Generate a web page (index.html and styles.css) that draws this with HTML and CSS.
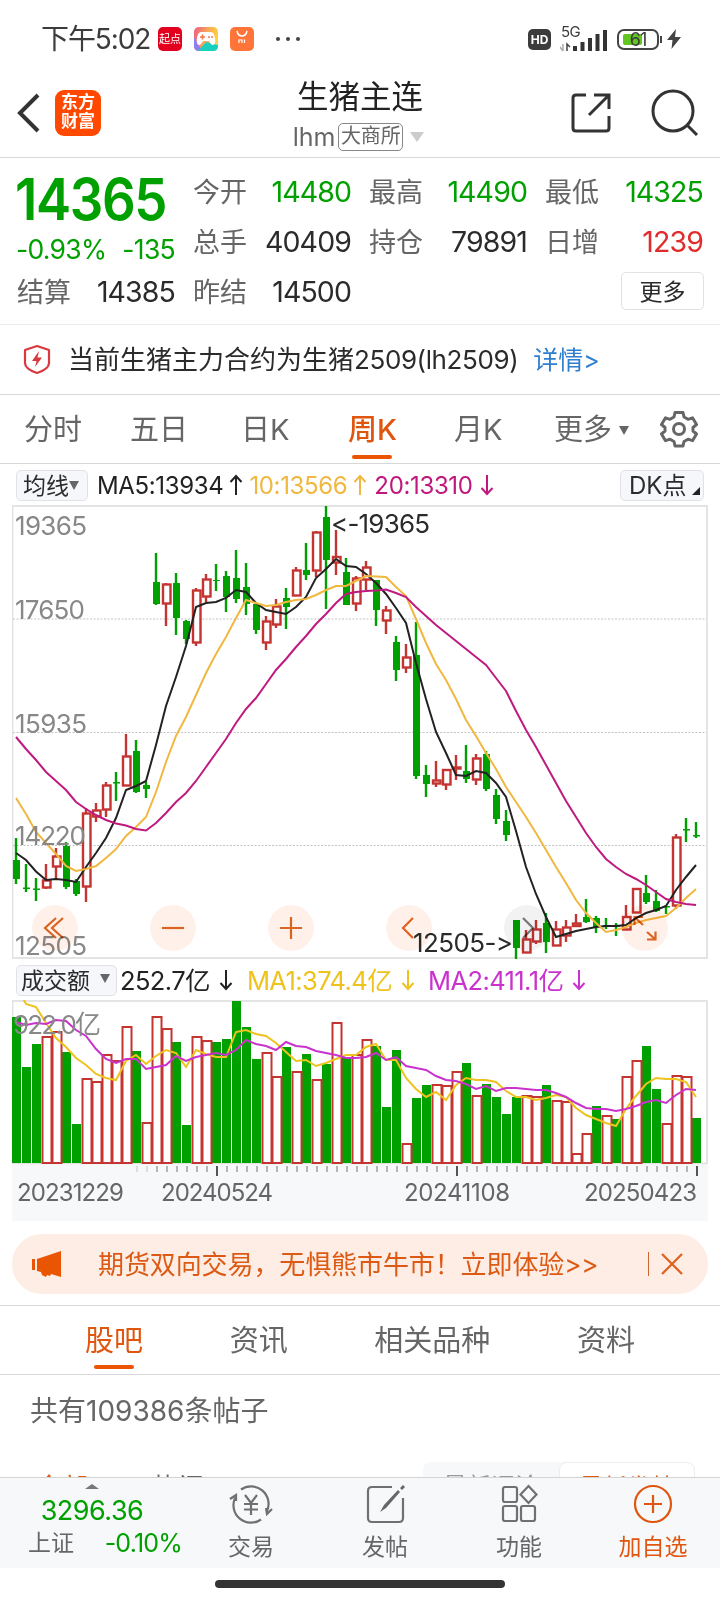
FILE: index.html
```html
<!DOCTYPE html>
<html lang="zh-CN">
  <head>
    <meta charset="UTF-8" />
    <title>生猪主连</title>
    <link rel="stylesheet" href="styles.css">
  </head>
  <body>
    <svg class="defs">
      <symbol id="up" viewBox="0 0 14 22"><path d="M7 21V2M1.5 8L7 2l5.500 6" /></symbol>
      <symbol id="down" viewBox="0 0 14 22"><path d="M7 1v19M1.500 14L7 20l5.500-6" /></symbol>
    </svg>

    <div class="status">
      <span class="time">下午5:02</span>
      <span class="app qd">起点</span>
      <svg class="app" viewBox="0 0 24 24">
        <defs>
          <linearGradient id="game" x1="0" y1="0.200" x2="1" y2="0.500">
            <stop offset="0" stop-color="#f0607e" />
            <stop offset="0.500" stop-color="#f7a65a" />
            <stop offset="1" stop-color="#fdd835" />
          </linearGradient>
        </defs>
        <rect width="24" height="24" rx="5" fill="url(#game)" />
        <path d="M0 10l8 14H5q-5 0-5-5z" fill="#8f7cf0" />
        <path d="M4 24l8-9 12 3v1q0 5-5 5z" fill="#19cfc0" />
        <path d="M7 5h10q3 0 4 6 1 7-2 7-2 0-4-4H9q-2 4-4 4-3 0-2-7 1-6 4-6z" fill="#fff" />
        <path d="M6 10h5M8.500 7.500v5M14 10h2M17 10h2" stroke="#f4784c" stroke-width="1.600" />
      </svg>
      <svg class="app" viewBox="0 0 24 24">
        <rect width="24" height="24" rx="5" fill="#ff7539" />
        <path d="M7 4q1 5 5 5t5-5" fill="none" stroke="#fff" stroke-width="1.500" />
        <path d="M9 16v-3h3v3M14.500 12.500V16" fill="none" stroke="#fff" stroke-width="1.200" />
      </svg>
      <span class="dots"><i></i><i></i><i></i></span>
      <span class="hd">HD</span>
      <span class="signal">
        <span class="net">5G</span>
        <svg width="48" height="26" viewBox="0 0 48 26">
          <path d="M3 18v7M0 21l3 4" stroke="#aaa" stroke-width="1.500" fill="none" />
          <path d="M7 25v-7l3 3" stroke="#444" stroke-width="1.500" fill="none" />
          <path d="M15 25v-5M22.500 25v-9M30 25V12M37.500 25V8M45 25V4" stroke="#333" stroke-width="4" />
        </svg>
      </span>
      <span class="battery"><b></b><span>61</span></span>
      <svg class="bolt" width="14" height="20" viewBox="0 0 14 20"><path d="M9 0L0 11h5.500L4.500 20 14 8H8z" fill="#444" /></svg>
    </div>

    <header>
      <svg class="back" width="24" height="40" viewBox="0 0 24 40"><path d="M21 2L3 20l18 18" /></svg>
      <div class="logo">东方<br>财富</div>
      <div class="title">
        <h1>生猪主连</h1>
        <div class="sub"><span>lhm</span><em>大商所</em><i class="tri"></i></div>
      </div>
      <svg class="share" width="42" height="42" viewBox="0 0 42 42"><path d="M16 3H6Q3 3 3 6v30q0 3 3 3h30q3 0 3-3V24M24 3h15v14M39 3L19 23" /></svg>
      <svg class="search" width="50" height="50" viewBox="0 0 50 50"><circle cx="23" cy="22" r="20" /><path d="M37 36l10 10" /></svg>
    </header>

    <section class="quote">
      <div class="last">
        <strong>14365</strong>
        <p><span>-0.93%</span><span>-135</span></p>
      </div>
      <div class="cell"><label>今开</label><span class="green">14480</span></div>
      <div class="cell"><label>最高</label><span class="green">14490</span></div>
      <div class="cell"><label>最低</label><span class="green">14325</span></div>
      <div class="cell"><label>总手</label><span>40409</span></div>
      <div class="cell"><label>持仓</label><span>79891</span></div>
      <div class="cell"><label>日增</label><span class="red">1239</span></div>
      <div class="cell"><label>结算</label><span>14385</span></div>
      <div class="cell"><label>昨结</label><span>14500</span></div>
      <button class="more">更多</button>
    </section>

    <section class="notice">
      <svg width="28" height="31" viewBox="0 0 28 31">
        <path d="M14 2l12 4v13q0 6-12 10Q2 25 2 19V6z" fill="none" stroke="#d9383c" stroke-width="2.200" stroke-linejoin="round" />
        <path d="M16 7l-7 10h4.500L12 23l7-9.500h-4.500z" fill="#d9383c" />
      </svg>
      <span class="msg">当前生猪主力合约为生猪<b>2509(lh2509)</b></span>
      <a>详情&gt;</a>
    </section>

    <nav class="periods">
      <span>分时</span>
      <span>五日</span>
      <span>日K</span>
      <span class="active">周K</span>
      <span>月K</span>
      <span>更多<i class="tri"></i></span>
      <svg width="38" height="38" viewBox="0 0 38 38">
        <path d="M15 2.500h8l1 4.500 4 2.300 4.500-1.500 4 6.700-3.500 3v3.500l3.500 3-4 6.700-4.500-1.500-4 2.300-1 4.500h-8l-1-4.500-4-2.300-4.500 1.500-4-6.700 3.500-3v-3.500l-3.500-3 4-6.700 4.500 1.500 4-2.300z" />
        <circle cx="19" cy="19" r="5.500" />
      </svg>
    </nav>

    <div class="ma-row">
      <button class="avg">均线<i class="tri"></i></button>
      <span class="ma5">MA5:13934</span><svg class="arrow ma5"><use href="#up" /></svg>
      <span class="ma10">10:13566</span><svg class="arrow ma10"><use href="#up" /></svg>
      <span class="ma20">20:13310</span><svg class="arrow ma20"><use href="#down" /></svg>
      <button class="dk">DK点<i></i></button>
    </div>

    <div class="chart">
      <svg id="kline" width="696" height="456" viewBox="12 504 696 456"></svg>
      <div class="tools">
        <span><svg viewBox="0 0 46 46"><path d="M24 13L13 23l11 10M31 13L20 23l11 10" /></svg></span>
        <span><svg viewBox="0 0 46 46"><path d="M12 23h22" /></svg></span>
        <span><svg viewBox="0 0 46 46"><path d="M12 23h22M23 12v22" /></svg></span>
        <span><svg viewBox="0 0 46 46"><path d="M27 13L17 23l10 10" /></svg></span>
        <span class="off"><svg viewBox="0 0 46 46"><path d="M19 13l10 10-10 10" /></svg></span>
        <span><svg viewBox="0 0 46 46"><path d="M21 20l-8-7.500M12.500 20v-8H21M25 27l8 7M25 34.500h8.500v-8" /></svg></span>
      </div>
    </div>

    <div class="vol-row">
      <button>成交额<i class="tri"></i></button>
      <span class="v0">252.7亿</span><svg class="arrow v0"><use href="#down" /></svg>
      <span class="v1">MA1:374.4亿</span><svg class="arrow v1"><use href="#down" /></svg>
      <span class="v2">MA2:411.1亿</span><svg class="arrow v2"><use href="#down" /></svg>
    </div>

    <div class="chart">
      <svg id="volume" width="696" height="165" viewBox="12 1000 696 165"></svg>
    </div>
    <div class="chart axis">
      <svg id="axis" width="696" height="56" viewBox="12 1165 696 56"></svg>
    </div>

    <div class="banner">
      <svg width="34" height="28" viewBox="0 0 34 28">
        <path d="M1 9h3v11H1zM6 9l24-8v26l-10-3-1 2-3-1-1 2-4-2-1-3-4-1z" fill="#ea5504" />
      </svg>
      <span>期货双向交易，无惧熊市牛市！立即体验&gt;&gt;</span>
      <i></i>
      <svg width="24" height="24" viewBox="0 0 24 24"><path d="M2 2l20 20M22 2L2 22" stroke="#e0601c" stroke-width="2.200" /></svg>
    </div>

    <nav class="tabs">
      <span class="active">股吧</span>
      <span>资讯</span>
      <span>相关品种</span>
      <span>资料</span>
    </nav>

    <main>
      <p>共有109386条帖子</p>
      <div class="filters">
        <span class="on">全部</span>
        <span>热门</span>
        <div class="sort"><span>最新评论</span><span class="on">最新发帖</span></div>
      </div>
    </main>

    <footer>
      <div class="index">
        <i class="tri"></i>
        <strong>3296.36</strong>
        <p>上证<span>-0.10%</span></p>
      </div>
      <div class="item">
        <svg viewBox="0 0 44 42">
          <path d="M12 6.500A17.500 17.500 0 0 1 38 28M32 36.500A17.500 17.500 0 0 1 6 15M1 16l6-4v6M43 26l-5 5-1-6M16 12l6 8 6-8M22 20v12M15 21h14M15 26.500h14" />
        </svg>
        <span>交易</span>
      </div>
      <div class="item">
        <svg viewBox="0 0 44 42">
          <path d="M29 4H9Q5 4 5 8v27q0 4 4 4h27q4 0 4-4V15" />
          <path d="M35 7L21 22l-4 7 6-4L37 9zM37 5l3-3 2 2-3 3z" class="fill" />
        </svg>
        <span>发帖</span>
      </div>
      <div class="item">
        <svg viewBox="0 0 44 42">
          <rect x="6" y="4" width="14" height="15" rx="2" />
          <rect x="6" y="23" width="14" height="15" rx="2" />
          <rect x="24" y="23" width="14" height="15" rx="2" />
          <path d="M31.500 3l8 8.500-8 8.500-8-8.500z" />
        </svg>
        <span>功能</span>
      </div>
      <div class="item add">
        <svg viewBox="0 0 44 42"><circle cx="22" cy="21" r="18" /><path d="M13 21h18M22 12v18" /></svg>
        <span>加自选</span>
      </div>
    </footer>
    <div class="home"></div>

    <script>
      const GREEN = "#00a000";
      const RED = "#c43431";
      const x = (i) => 16 + i * 10;

      // colour, high, body top, body bottom, low
      const candles = [
        ["g", 838, 860, 879, 884], ["g", 864, 887.5, 889, 892], ["g", 878, 888.5, 890, 901], ["r", 864, 880, 888, 889],
        ["r", 848, 856, 867, 880], ["g", 842, 846, 887, 889], ["g", 879, 881, 894, 896], ["r", 808, 813, 887, 902],
        ["r", 803, 810, 817, 822], ["r", 782, 785, 810, 817], ["g", 772, 782, 783.5, 801], ["r", 734, 756, 786, 786],
        ["g", 740, 751, 792, 793], ["g", 782, 785, 789, 798], ["g", 553, 582, 604, 605], ["r", 583, 584, 604, 626],
        ["g", 573, 583, 618, 635], ["g", 620, 621, 639, 644], ["r", 588, 590, 643, 646], ["r", 574, 579, 597, 602],
        ["g", 564, 580, 581, 591], ["g", 571, 576, 597, 612], ["g", 550, 578, 599, 603], ["g", 563, 587, 604, 615],
        ["g", 603, 604, 630, 634], ["r", 616, 621, 643, 650], ["r", 599, 606, 625, 628], ["g", 588, 598, 607, 629],
        ["r", 567, 570, 596, 596], ["g", 543, 570, 575, 580], ["r", 531, 532, 571, 577], ["g", 506, 517, 560, 609],
        ["r", 530, 556.5, 563, 575], ["g", 558, 572, 605, 605], ["r", 576, 578, 604, 611], ["r", 561, 567, 580, 590],
        ["g", 580, 580, 610, 626], ["r", 606, 610, 621, 634], ["g", 636, 642, 670, 681], ["r", 644, 657, 668, 673],
        ["g", 622, 655, 776, 779], ["g", 765, 775, 784, 797], ["r", 761, 780, 784, 787], ["r", 769, 769.5, 785, 790],
        ["r", 755, 767, 769, 780], ["g", 745, 771, 779, 783], ["r", 754, 758, 780, 785], ["g", 751, 754, 789, 791],
        ["g", 789, 795, 819, 824], ["g", 810, 821, 835, 841], ["g", 920, 920, 948, 959], ["r", 930, 939, 953, 953],
        ["r", 920, 929, 942, 944], ["g", 913, 923, 942, 953], ["r", 921, 929, 946, 946], ["r", 920, 927, 936, 942],
        ["r", 914, 923, 926.5, 926.5], ["g", 899, 917, 922, 923], ["g", 916, 918, 927, 933], ["g", 918, 925, 927, 929],
        ["g", 923, 926, 927, 936], ["r", 905, 916.5, 930, 930], ["r", 888, 888.5, 913, 913], ["g", 875, 893, 902, 904],
        ["g", 890, 901, 911, 912], ["g", 905, 906, 907.5, 914], ["r", 834, 837, 906, 909], ["g", 818, 829, 830.5, 842],
        ["g", 822, 835, 836.5, 838],
      ];

      const ma5 = [853, 860, 871.5, 880, 879, 880, 882, 867, 853, 838, 818, 790, 786, 781, 745, 706, 677, 646, 607, 603,
        602, 598, 590, 592, 603, 610, 612, 614, 607, 597, 578, 569, 559, 566, 567, 574, 583, 594, 608, 623, 663, 699,
        732, 753, 775, 776, 771, 773, 783, 797, 831, 867, 894, 917, 937, 934, 931, 929, 927, 926, 926, 925, 918, 913,
        910, 906, 890, 877, 865];
      const ma10 = [798, 814, 832, 843, 854, 866, 871, 869, 866, 858, 849, 836, 827, 817, 792, 762, 736, 717, 695, 673,
        654, 637, 618, 600, 603, 606, 605, 602, 600, 599, 595, 590, 586, 586, 581, 576, 576.5, 577, 587, 596, 619, 643,
        664, 680, 699, 720, 736, 753, 769, 787, 802, 817, 833, 850, 867, 883, 900, 913, 923, 932, 930, 927, 923, 920,
        918, 916, 908, 898, 889];
      const ma20 = [737, 749, 760, 772, 781, 790, 802, 809, 815, 820, 823.5, 825.5, 829, 830.5, 823, 813, 802, 793, 781,
        767, 753, 739, 723, 709, 698, 684, 670, 659, 647, 636, 624, 614, 603, 594, 592, 591, 590.5, 589.5, 593, 597, 607,
        616, 625, 633, 641, 649, 657, 665, 678, 691, 711, 730, 747, 765, 783, 801, 817, 833, 847, 859, 867, 874, 879,
        885, 892, 899, 902, 904, 905];

      // top of each volume bar, colours below
      const volTops = [1017, 1067, 1044, 1037, 1032, 1052, 1124, 1079, 1082, 1055, 1061, 1027, 1051, 1123, 1017, 1029,
        1042, 1125, 1037, 1041, 1042, 1039, 1001, 1027, 1059, 1053, 1077, 1047, 1072, 1054, 1080, 1064, 1023, 1057,
        1055, 1040, 1046, 1107, 1050, 1144, 1098, 1085, 1085, 1086, 1072, 1063, 1096, 1084, 1097, 1114, 1097, 1096,
        1097, 1085, 1101, 1102, 1154, 1134, 1106, 1116, 1119, 1077, 1061, 1046, 1089, 1124, 1076, 1077, 1118];
      const volColors = "gggrrggrrrrrgrrrggrrgggggrrgrgrgrgrrgggrggrrrgrggggrrgrrrrgrgrrggrrrg";
      const volMa1 = [985, 1004, 1007, 1023, 1038, 1047, 1058, 1065, 1074, 1078, 1080, 1061, 1055, 1064, 1056, 1050,
        1053, 1067, 1050, 1054, 1057, 1057, 1032, 1030, 1034, 1036, 1043, 1052, 1061, 1060, 1066, 1063, 1059, 1055,
        1055, 1047, 1044, 1060, 1060, 1078, 1089, 1097, 1092, 1100, 1085, 1078, 1080, 1080, 1082, 1091, 1097, 1097,
        1100, 1098, 1095, 1097, 1108, 1115, 1119, 1123, 1126, 1109, 1096, 1084, 1078, 1079, 1079, 1082, 1097];
      const volMa2 = [1022, 1025, 1023, 1024, 1020, 1021, 1030, 1036, 1049, 1059, 1063, 1059, 1059, 1069, 1067, 1065,
        1056, 1061, 1057, 1055, 1053, 1055, 1050, 1040, 1044, 1046, 1050, 1042, 1046, 1047, 1051, 1053, 1055, 1058,
        1058, 1057, 1053, 1060, 1057, 1066, 1068, 1070, 1076, 1080, 1081, 1084, 1089, 1086, 1091, 1088, 1088, 1089,
        1090, 1090, 1093, 1097, 1103, 1108, 1109, 1109, 1111, 1109, 1106, 1102, 1100, 1103, 1095, 1089, 1090];

      function line(values, color) {
        const points = values.map((y, i) => `${x(i)},${y}`).join(" ");
        return `<polyline points="${points}" fill="none" stroke="${color}" stroke-width="2" />`;
      }

      function label(text, left, baseline, width, cls) {
        return `<text x="${left}" y="${baseline}" textLength="${width}" class="${cls}">${text}</text>`;
      }

      function drawKline() {
        let out = "";
        [619, 732.5, 845.5].forEach((y) => {
          out += `<path d="M13 ${y}H707" class="grid" />`;
        });
        out += `<rect x="12.500" y="506" width="694.500" height="452" class="frame" />`;
        candles.forEach(([c, high, top, bottom, low], i) => {
          const cx = x(i);
          if (c === "g") {
            out += `<path d="M${cx} ${high}V${low}" stroke="${GREEN}" stroke-width="2.400" />`;
            out += `<rect x="${cx - 3}" y="${top}" width="7" height="${bottom - top}" fill="${GREEN}" />`;
          } else {
            out += `<path d="M${cx} ${high}V${top}M${cx} ${bottom}V${low}" stroke="${RED}" stroke-width="2.400" />`;
            out += `<rect x="${cx - 3}" y="${top + 0.5}" width="7.500" height="${Math.max(bottom - top - 1, 1)}" fill="#fff" stroke="${RED}" stroke-width="2.400" />`;
          }
        });
        out += line(ma5, "#222") + line(ma10, "#f0b840") + line(ma20, "#bf1a80");
        out += label("19365", 15, 535, 72, "scale");
        out += label("17650", 15, 619, 70, "scale");
        out += label("15935", 15, 733, 72, "scale");
        out += label("14220", 15, 845, 71, "scale");
        out += label("12505", 15, 955, 72, "scale");
        out += label("&lt;-19365", 331, 533, 99, "mark");
        out += label("12505-&gt;", 413, 952, 100, "mark");
        document.getElementById("kline").innerHTML = out;
      }

      function drawVolume() {
        let out = `<rect x="12.500" y="1001" width="694.500" height="162.500" class="frame" />`;
        volTops.forEach((top, i) => {
          const left = 12 + i * 10;
          if (volColors[i] === "g") {
            out += `<rect x="${left}" y="${top}" width="9" height="${1163 - top}" fill="${GREEN}" />`;
          }
        });
        volTops.forEach((top, i) => {
          const left = 12 + i * 10;
          if (volColors[i] === "r") {
            out += `<rect x="${left + 0.5}" y="${top}" width="9" height="${1163 - top}" fill="#fff" stroke="${RED}" stroke-width="2" />`;
          }
        });
        out += line(volMa1, "#eec31e") + line(volMa2, "#c932cc");
        out += label("922.0亿", 13, 1034, 88, "scale");
        document.getElementById("volume").innerHTML = out;
      }

      function drawAxis() {
        let out = "";
        for (let i = 0; i < 57; i++) {
          const tx = 137 + i * 10;
          const major = tx === 217 || tx === 457 || tx === 697;
          const color = major ? "#555" : i < 2 ? "#ddd" : "#b5b5b5";
          out += `<path d="M${tx} 1166v${major ? 10 : 6}" stroke="${color}" stroke-width="2" />`;
        }
        out += label("20231229", 17, 1201, 107, "date");
        out += label("20240524", 161, 1201, 112, "date");
        out += label("20241108", 404, 1201, 106, "date");
        out += label("20250423", 584, 1201, 113, "date");
        document.getElementById("axis").innerHTML = out;
      }

      drawKline();
      drawVolume();
      drawAxis();
    </script>
  </body>
</html>
```

FILE: styles.css
```css
* {
  box-sizing: border-box;
}
body {
  font-family: Inter, "Noto Sans CJK SC", sans-serif;
  font-feature-settings: "calt" 0;
  margin: 0;
  width: 720px;
  height: 1600px;
  background: #fff;
  color: #2b2b2b;
  overflow: hidden;
  white-space: nowrap;
}
p,
h1 {
  margin: 0;
  font-weight: 400;
}
i,
em {
  font-style: normal;
}
b {
  font-weight: 400;
}
svg {
  display: block;
  flex: none;
}
button {
  font: inherit;
  color: inherit;
  padding: 0;
  border: 1.5px solid #e0e2e6;
  border-radius: 5px;
  background: #f6f7fa;
  display: flex;
  align-items: center;
}
.defs {
  width: 0;
  height: 0;
  position: absolute;
}
.tri {
  display: inline-block;
  border: 5px solid transparent;
  border-top: 9px solid #666;
  border-bottom: 0;
}

/* status bar */
.status {
  height: 78px;
  padding: 0 39px 0 41px;
  display: flex;
  align-items: center;
  color: #3c3c3c;
}
.time {
  font-size: 28px;
  width: 117px;
  padding-bottom: 4px;
  letter-spacing: -1.1px;
}
.app {
  width: 24px;
  height: 24px;
  margin-right: 12px;
}
.qd {
  background: #e2001e;
  border-radius: 5px;
  color: #fff;
  font-size: 11px;
  line-height: 24px;
  text-align: center;
}
.dots {
  display: flex;
  gap: 6px;
  margin: 0 auto 0 10px;
}
.dots i {
  width: 4px;
  height: 4px;
  border-radius: 50%;
  background: #444;
}
.hd {
  width: 23px;
  height: 21px;
  border-radius: 5px;
  background: #3c3c3c;
  color: #fff;
  font-size: 12px;
  font-weight: 700;
  line-height: 21px;
  text-align: center;
}
.signal {
  width: 48px;
  height: 26px;
  margin: 0 9px;
  position: relative;
}
.net {
  position: absolute;
  left: 1px;
  top: -2px;
  font-size: 15px;
  line-height: 15px;
  letter-spacing: -0.5px;
}
.battery {
  width: 42px;
  height: 21px;
  border: 2px solid #444;
  border-radius: 7px;
  position: relative;
  margin-right: 8px;
  font-size: 18px;
  line-height: 17px;
  letter-spacing: -1px;
  text-align: center;
}
.battery span {
  position: relative;
}
.battery b {
  position: absolute;
  left: 4px;
  top: 3px;
  width: 19px;
  height: 11px;
  border-radius: 2px;
  background: #62c520;
}
.battery::after {
  content: "";
  position: absolute;
  right: -5px;
  top: 5px;
  width: 2px;
  height: 7px;
  background: #444;
}

/* header */
header {
  height: 80px;
  padding: 0 20px 10px 17px;
  display: flex;
  align-items: center;
  border-bottom: 1.5px solid #d8d8d8;
}
header path,
header circle {
  fill: none;
  stroke: #333;
  stroke-width: 3;
}
.back path {
  stroke-width: 4;
}
.logo {
  width: 46px;
  height: 46px;
  margin-left: 14px;
  border-radius: 9px;
  background: #ff4800;
  color: #fff;
  font-size: 17px;
  font-weight: 700;
  line-height: 19px;
  text-align: center;
  padding-top: 3px;
}
.title {
  flex: 1;
  height: 72px;
  padding-left: 46px;
  display: flex;
  flex-direction: column;
  align-items: center;
}
h1 {
  font-size: 31.5px;
  line-height: 40px;
  padding-left: 3px;
  color: #222;
}
.sub {
  display: flex;
  align-items: center;
  height: 28px;
  margin-top: 6px;
  color: #666;
  font-size: 25px;
}
.sub em {
  margin: 0 7px 0 3px;
  border: 1.5px solid #888;
  border-radius: 5px;
  width: 65px;
  height: 28px;
  font-size: 20px;
  line-height: 24px;
  text-align: center;
}
.sub .tri {
  border-width: 10px 7px 0;
  border-top-color: #ccc;
}
.share {
  margin-right: 38px;
}
.search {
  margin-top: 3px;
}

/* quote */
.quote {
  height: 167px;
  padding: 8px 17px 0;
  display: grid;
  grid-template-columns: repeat(4, 158px);
  grid-template-rows: 50px 50px 50px;
  column-gap: 18px;
  border-bottom: 1.5px solid #ebebeb;
}
.last {
  grid-row: span 2;
  color: #00a000;
}
.last strong {
  display: block;
  font-size: 58px;
  font-weight: 600;
  line-height: 66px;
  height: 67px;
  letter-spacing: -1.5px;
  transform: scaleX(0.91);
  transform-origin: left;
  margin-left: -2px;
}
.last p {
  display: flex;
  justify-content: space-between;
  font-size: 26.5px;
  line-height: 32px;
  letter-spacing: -0.7px;
  margin-left: -1px;
}
.cell {
  display: flex;
  justify-content: space-between;
  align-items: center;
  font-size: 28.5px;
  letter-spacing: -0.9px;
}
.cell label {
  font-size: 27px;
  letter-spacing: 0;
  color: #666;
  padding-bottom: 2px;
}
.green {
  color: #00a000;
}
.red {
  color: #e02c2c;
}
.more {
  grid-column: 4;
  justify-self: end;
  align-self: center;
  width: 83px;
  height: 38px;
  margin: 0 -1px 0 0;
  padding-bottom: 3px;
  justify-content: center;
  background: #fff;
  font-size: 23px;
}

/* notice */
.notice {
  height: 70px;
  padding-left: 23px;
  display: flex;
  align-items: center;
  font-size: 26px;
  border-bottom: 1.5px solid #d8d8d8;
}
.msg {
  margin: 0 15px 0 17px;
  padding-bottom: 4px;
}
.msg b {
  letter-spacing: -0.4px;
}
.notice a {
  color: #2f7fd0;
  font-size: 25px;
  padding-bottom: 4px;
}

/* period tabs */
.periods {
  height: 69px;
  padding-left: 24px;
  display: grid;
  grid-template-columns: 106px 111px 107px 106px 100px 106px 38px;
  align-items: center;
  font-size: 29px;
  color: #666;
  border-bottom: 1.5px solid #d8d8d8;
}
.periods span,
.tabs span {
  position: relative;
  justify-self: start;
  padding-bottom: 5px;
}
.periods .active,
.tabs .active {
  color: #e0560f;
}
.periods .active {
  font-weight: 500;
}
.active::after {
  content: "";
  position: absolute;
  left: calc(50% - 20px);
  bottom: -6px;
  width: 40px;
  height: 4px;
  border-radius: 2px;
  background: #ea5504;
}
.tabs .active::after {
  bottom: -5px;
}
.periods .tri {
  margin: 0 0 5px 7px;
}
.periods svg {
  fill: none;
  stroke: #666;
  stroke-width: 3;
  stroke-linejoin: round;
}

/* indicator rows */
.ma-row,
.vol-row {
  display: flex;
  align-items: center;
  padding: 0 16px;
}
.ma-row {
  height: 40px;
  padding-top: 2px;
  font-size: 24px;
  letter-spacing: -0.35px;
}
.vol-row {
  height: 40px;
  font-size: 25.5px;
  letter-spacing: -0.6px;
}
.vol-row > span {
  padding-bottom: 3px;
}
.ma-row button,
.vol-row button {
  height: 31px;
  font-size: 23px;
  letter-spacing: 0;
  padding-bottom: 3px;
}
.ma-row .avg .tri {
  margin-top: 3px;
}
.avg {
  width: 72px;
  padding-left: 6px;
  margin-right: 9px;
}
.dk {
  width: 84px;
  padding-left: 8px;
  margin-left: auto;
}
.ma-row .dk {
  font-size: 24px;
}
.dk i {
  border: 4px solid #222;
  border-top-color: transparent;
  border-left-color: transparent;
  margin: 15px 0 0 6px;
}
.arrow {
  width: 14px;
  height: 22px;
  fill: none;
  stroke: currentColor;
  stroke-width: 2;
  margin: 0 6px 0 6px;
}
.ma5 {
  color: #222;
}
.ma10 {
  color: #f0b840;
}
.ma20 {
  color: #c0187e;
}
.ma-row .arrow.ma10 {
  margin-right: 7px;
}
.ma-row .arrow.ma20 {
  margin-left: 7px;
}
.vol-row button {
  width: 101px;
  padding-left: 4px;
  margin-right: 3px;
}
.vol-row .tri {
  margin-left: 10px;
}
.vol-row .arrow {
  margin: 0 14px 0 9px;
}
.vol-row .arrow.v1 {
  margin-right: 13px;
}
.v0 {
  color: #222;
}
.v1 {
  color: #eec31e;
}
.v2 {
  color: #c932cc;
}

/* charts */
.chart {
  margin-left: 12px;
  width: 696px;
  position: relative;
}
.axis {
  background: #f7f8fa;
}
.frame {
  fill: none;
  stroke: #e2e2e2;
  stroke-width: 1.8;
}
.grid {
  stroke: #c4c4c4;
  stroke-width: 1;
  stroke-dasharray: 2 1.5;
}
.scale {
  font-size: 26px;
  fill: #888;
}
.mark {
  font-size: 26px;
  fill: #2b2b2b;
}
.date {
  font-size: 24px;
  fill: #666;
}
.tools {
  position: absolute;
  left: 20px;
  top: 401px;
  display: flex;
  gap: 72px;
  mix-blend-mode: multiply;
}
.tools span {
  width: 46px;
  height: 46px;
  border-radius: 50%;
  background: #fff1ea;
}
.tools svg {
  fill: none;
  stroke: #dc6420;
  stroke-width: 2.2;
}
.tools .off {
  background: #f2f2f2;
}
.tools .off svg {
  stroke: #777;
}

/* banner */
.banner {
  margin: 13px 12px 11px;
  height: 60px;
  border-radius: 30px;
  background: #fdede4;
  padding: 0 24px 0 19px;
  display: flex;
  align-items: center;
  color: #dd5a14;
  font-size: 26px;
}
.banner span {
  margin-left: 33px;
  padding-bottom: 4px;
  letter-spacing: -0.1px;
}
.banner i {
  width: 1.5px;
  height: 24px;
  margin: 0 11px 0 auto;
  background: #c9672f;
}

/* forum */
.tabs {
  height: 70px;
  padding: 0 85px;
  display: flex;
  align-items: center;
  justify-content: space-between;
  border: 1.5px solid #d8d8d8;
  border-width: 1.5px 0;
  font-size: 29px;
  color: #666;
}
main {
  height: 102px;
  overflow: hidden;
  color: #666;
}
main p {
  padding: 16px 0 0 30px;
  font-size: 28px;
  line-height: 40px;
}
.filters {
  display: flex;
  align-items: flex-start;
  margin-top: 31px;
  padding: 0 25px 0 36px;
  font-size: 26px;
  line-height: 52px;
}
.filters > span {
  margin-right: 64px;
}
.filters .on {
  color: #dd5a14;
}
.sort {
  display: flex;
  margin-left: auto;
  background: #f7f8fa;
  border-radius: 8px;
  font-size: 24px;
  line-height: 49px;
  color: #999;
  height: 50px;
}
.sort span {
  width: 136px;
  text-align: center;
}
.sort .on {
  background: #fff;
  border: 1.5px solid #eee;
  border-radius: 8px;
}

/* bottom bar */
footer {
  height: 91px;
  background: #f6f8fa;
  border-top: 1.5px solid #d4d4d4;
  display: flex;
  color: #666;
}
.index {
  width: 184px;
  height: 89px;
  text-align: center;
  position: relative;
}
.index .tri {
  position: absolute;
  left: 85px;
  top: 6px;
  border-width: 0 7px 5px;
  border-bottom: 5px solid #777;
}
.index strong {
  display: block;
  padding-top: 15px;
  font-size: 27px;
  font-weight: 400;
  line-height: 36px;
  letter-spacing: -0.5px;
  color: #00a000;
}
.index p {
  font-size: 23px;
  line-height: 29px;
  display: flex;
  justify-content: space-between;
  padding: 0 2px 0 28px;
}
.index p span {
  color: #00a000;
  font-size: 25px;
  letter-spacing: -0.8px;
}
.item {
  width: 134px;
  display: flex;
  flex-direction: column;
  align-items: center;
  font-size: 23px;
}
.item svg {
  width: 44px;
  height: 42px;
  margin-top: 5px;
  fill: none;
  stroke: #707070;
  stroke-width: 2.2;
}
.item .fill {
  fill: #666;
  stroke: none;
}
.item span {
  line-height: 30px;
  margin-top: 7px;
}
.add {
  color: #e0560f;
}
.item.add svg {
  stroke: #e0560f;
}
.home {
  width: 290px;
  height: 8px;
  margin: 12px auto 0;
  border-radius: 4px;
  background: #333;
}
```
